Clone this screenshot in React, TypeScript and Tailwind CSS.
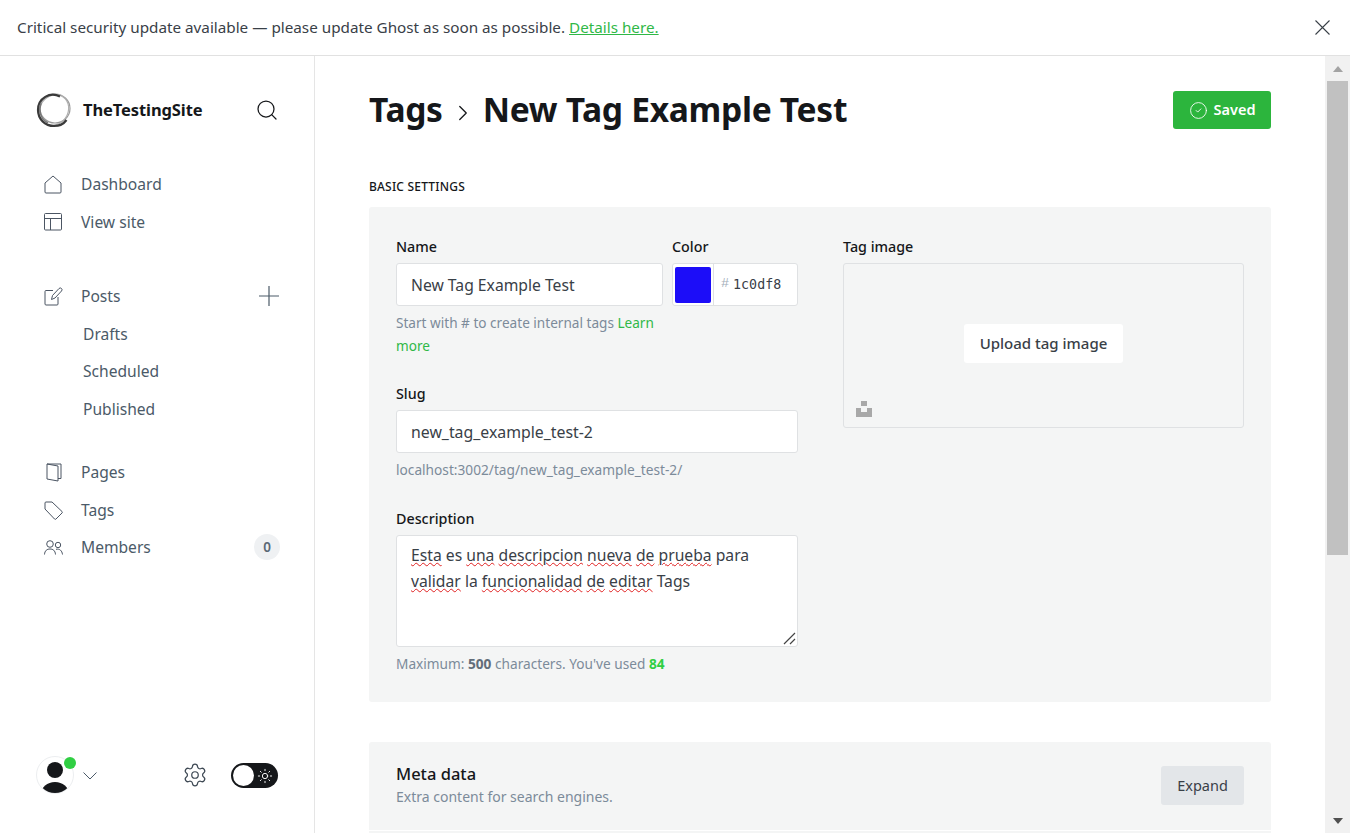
import { Search, Settings, ChevronRight, CircleCheck, Sun } from "lucide-react";

const font = "font-['Noto_Sans','Open_Sans',sans-serif]";

function HomeIcon() {
  return (
    <svg width="18" height="19" viewBox="0 0 18 19" fill="none" stroke="#4b5563" strokeWidth="1">
      <path d="M1 8 L9 1 L17 8 V17 a1 1 0 0 1 -1 1 H2 a1 1 0 0 1 -1 -1 Z" />
    </svg>
  );
}

function LayoutIcon() {
  return (
    <svg width="18" height="18" viewBox="0 0 18 18" fill="none" stroke="#4b5563" strokeWidth="1">
      <rect x="0.5" y="0.5" width="17" height="16.5" rx="1" />
      <path d="M0.5 5.5 H17.5 M6.5 5.5 V17" />
    </svg>
  );
}

function EditIcon() {
  return (
    <svg width="19" height="19" viewBox="0 0 19 19" fill="none" stroke="#4b5563" strokeWidth="1">
      <path d="M9 3.5 H2 a1 1 0 0 0 -1 1 V17 a1 1 0 0 0 1 1 H13 a1 1 0 0 0 1 -1 V10" />
      <path d="M7.5 12.5 L8.5 8.5 L15 1.5 a1.5 1.5 0 0 1 2.5 2.5 L11 11 Z" />
    </svg>
  );
}

function PagesIcon() {
  return (
    <svg width="16" height="19" viewBox="0 0 16 19" fill="none" stroke="#4b5563" strokeWidth="1" className="ml-[2px]">
      <path d="M1 1 H15 V15.5 H12" />
      <path d="M1 1 L12 3 V18 L1 16 Z" />
    </svg>
  );
}

function TagIcon() {
  return (
    <svg width="19" height="19" viewBox="0 0 19 19" fill="none" stroke="#4b5563" strokeWidth="1">
      <path d="M1 2 a1 1 0 0 1 1 -1 H8 L18 10.5 a1 1 0 0 1 0 1.5 L12 18 a1 1 0 0 1 -1.5 0 L1 8 Z" />
    </svg>
  );
}

function MembersIcon() {
  return (
    <svg width="19" height="15" viewBox="0 0 19 15" fill="none" stroke="#4b5563" strokeWidth="1">
      <circle cx="6" cy="4" r="3.3" />
      <circle cx="14" cy="5" r="2.7" />
      <path d="M0.5 14.5 C0.8 10.5 3 9 6 9 C9 9 11.2 10.5 11.5 14.5" />
      <path d="M12 9.3 C15.5 8.5 18 10.5 18.5 14.5" />
    </svg>
  );
}

function Logo() {
  return (
    <svg width="36" height="36" viewBox="0 0 36 36" fill="none">
      <ellipse cx="19" cy="16.5" rx="15" ry="14.5" stroke="#9a9a9a" strokeWidth="1.2" />
      <ellipse cx="18" cy="18" rx="14" ry="16" stroke="#b0b0b0" strokeWidth="1.2" transform="rotate(35 18 18)" />
      <path d="M24 4.5 C14 -0.5 2 6 2 18 C2 27 9 34 18 34 C24 34 28 31.5 30.5 28" stroke="#3a3a3a" strokeWidth="2.2" />
      <path d="M5 11 C2.5 18 4 27 12 31" stroke="#777" strokeWidth="1.6" />
    </svg>
  );
}

function NavItem({ icon, label, right }: { icon: React.ReactNode; label: string; right?: React.ReactNode }) {
  return (
    <div className="flex h-[37.5px] items-center pl-[44px] pr-[35px] text-[15.6px] text-[#4b5a68]">
      <span className="flex w-[37px] items-center">{icon}</span>
      <span className="flex-1">{label}</span>
      {right}
    </div>
  );
}

function Sidebar() {
  return (
    <aside className="flex w-[315px] shrink-0 flex-col border-r border-[#e5e5e5] bg-white">
      <div className="flex h-[108px] items-center pl-[36px] pr-[35px]">
        <Logo />
        <span className="ml-[11px] flex-1 text-[16.5px] font-bold tracking-[-0.1px] text-[#15171a]">TheTestingSite</span>
        <Search size={24} strokeWidth={1.25} className="text-[#15171a]" />
      </div>
      <nav className="mt-[2px]">
        <NavItem icon={<HomeIcon />} label="Dashboard" />
        <NavItem icon={<LayoutIcon />} label="View site" />
      </nav>
      <nav className="mt-[37px]">
        <NavItem
          icon={<EditIcon />}
          label="Posts"
          right={
            <svg width="20" height="20" viewBox="0 0 20 20" fill="none" stroke="#4b5a68" strokeWidth="1.2" className="mb-[2px]">
              <path d="M10 0 V20 M0 10 H20" />
            </svg>
          }
        />
        <div className="pl-[83px] text-[15.6px] text-[#4b5a68]">
          <div className="flex h-[37.5px] items-center">Drafts</div>
          <div className="flex h-[37.5px] items-center">Scheduled</div>
          <div className="flex h-[37.5px] items-center">Published</div>
        </div>
      </nav>
      <nav className="mt-[26px]">
        <NavItem icon={<PagesIcon />} label="Pages" />
        <NavItem icon={<TagIcon />} label="Tags" />
        <NavItem
          icon={<MembersIcon />}
          label="Members"
          right={
            <span className="mb-[2px] mr-[-1px] flex h-[26px] w-[26px] items-center justify-center rounded-full bg-[#eff1f3] text-[13.5px] font-semibold text-[#5b6875]">
              0
            </span>
          }
        />
      </nav>
      <div className="mt-auto flex h-[80px] items-start px-[36px] pt-[3px]">
        <div className="relative h-[38px] w-[38px] rounded-full border border-[#eceef0] bg-white">
          <svg width="36" height="36" viewBox="0 0 36 36" className="overflow-hidden rounded-full">
            <circle cx="18" cy="13" r="8" fill="#15171a" />
            <ellipse cx="18" cy="37" rx="14" ry="12" fill="#15171a" />
          </svg>
          <span className="absolute right-[-3px] top-0 h-[12px] w-[12px] rounded-full bg-[#30cf43]" />
        </div>
        <svg width="14" height="8" viewBox="0 0 14 8" fill="none" stroke="#4b5a68" strokeWidth="1" className="ml-[9px] mt-[16px]">
          <path d="M0.5 0.5 L7 7 L13.5 0.5" />
        </svg>
        <Settings size={26} strokeWidth={1.15} className="ml-[85px] mt-[6px] text-[#3f4a55]" />
        <div className="ml-[23px] mt-[7px] flex h-[25px] w-[47px] items-center rounded-full bg-[#15171a] pl-[2px]">
          <span className="h-[21px] w-[21px] rounded-full bg-white" />
          <Sun size={16} strokeWidth={1.4} className="ml-[3px] text-white" />
        </div>
      </div>
    </aside>
  );
}

function Label({ children }: { children: React.ReactNode }) {
  return <div className="mb-[4px] text-[14.3px] font-medium leading-[24px] text-[#15171a]">{children}</div>;
}

function Misspelled({ children }: { children: React.ReactNode }) {
  return <span className="underline decoration-[#e02020] decoration-wavy decoration-1 underline-offset-[1px]">{children}</span>;
}

function TagForm() {
  return (
    <div className="rounded-[3px] bg-[#f4f5f5] px-[27px] pb-[27px] pt-[28px]">
      <div className="flex gap-[45px]">
        <div className="w-[402px]">
          <div className="flex gap-[9px]">
            <div className="w-[267px]">
              <Label>Name</Label>
              <div className="flex h-[43px] items-center rounded-[3px] border border-[#dfe1e3] bg-white px-[14px] pt-[2px] text-[15.7px] text-[#394047]">
                New Tag Example Test
              </div>
              <p className="mt-[5px] text-[13.6px] leading-[23px] text-[#7c8b9a]">
                Start with # to create internal tags <span className="text-[#30b847]">Learn</span>{" "}
                <span className="text-[#30b847]">more</span>
              </p>
            </div>
            <div className="w-[126px]">
              <Label>Color</Label>
              <div className="flex h-[43px] items-center rounded-[3px] border border-[#dfe1e3] bg-white">
                <span className="ml-[2px] h-[36px] w-[36px] rounded-[2px] bg-[#1c0df8]" />
                <span className="ml-[2px] h-full border-l border-[#dfe1e3]" />
                <span className="ml-[7px] font-['Liberation_Mono',monospace] text-[13.5px] text-[#a3aeb9]">#</span>
                <span className="ml-[4px] font-['DejaVu_Sans_Mono',monospace] text-[13.3px] text-[#394047]">1c0df8</span>
              </div>
            </div>
          </div>
          <div className="mt-[25px]">
            <Label>Slug</Label>
            <div className="flex h-[43px] items-center rounded-[3px] border border-[#dfe1e3] bg-white px-[14px] pt-[3px] text-[15.85px] text-[#394047]">
              new_tag_example_test-2
            </div>
            <p className="mt-[5px] text-[13.7px] leading-[23px] text-[#7c8b9a]">localhost:3002/tag/new_tag_example_test-2/</p>
          </div>
          <div className="mt-[26px]">
            <Label>Description</Label>
            <div className="relative h-[112px] rounded-[3px] border border-[#dfe1e3] bg-white px-[14px] py-[6px] text-[15.7px] leading-[26px] text-[#394047]">
              <Misspelled>Esta</Misspelled> es <Misspelled>una</Misspelled> <Misspelled>descripcion</Misspelled>{" "}
              <Misspelled>nueva</Misspelled> <Misspelled>de</Misspelled> <Misspelled>prueba</Misspelled> para{" "}
              <Misspelled>validar</Misspelled> la <Misspelled>funcionalidad</Misspelled> <Misspelled>de</Misspelled>{" "}
              <Misspelled>editar</Misspelled> Tags
              <svg width="13" height="13" viewBox="0 0 13 13" className="absolute bottom-[1px] right-[1px]" stroke="#444" strokeWidth="1.2">
                <path d="M1 12 L12 1 M7 12 L12 7" />
              </svg>
            </div>
            <p className="mt-[5px] text-[13.66px] leading-[23px] text-[#7c8b9a]">
              Maximum: <b className="font-bold text-[#626d79]">500</b> characters. You've used{" "}
              <b className="font-bold text-[#30cf43]">84</b>
            </p>
          </div>
        </div>
        <div className="w-[401px]">
          <Label>Tag image</Label>
          <div className="relative flex h-[165px] items-center justify-center rounded-[3px] border border-[#dfe1e3] bg-[#f4f5f5]">
            <button className="mb-[5px] h-[39px] w-[159px] rounded-[3px] bg-white text-[15px] font-medium text-[#394047]">Upload tag image</button>
            <svg width="16" height="16" viewBox="0 0 16 16" className="absolute bottom-[10px] left-[12px]" fill="#a8a8a8">
              <rect x="5" y="0" width="6" height="5" />
              <path d="M0 7 H5 V11 H11 V7 H16 V16 H0 Z" />
            </svg>
          </div>
        </div>
      </div>
    </div>
  );
}

function MetaCard() {
  return (
    <div className="mt-[40px] flex h-[88px] items-center justify-between rounded-t-[3px] bg-[#f4f5f5] px-[27px]">
      <div className="pb-[2px]">
        <div className="mb-[2px] text-[16.5px] font-medium leading-[22px] text-[#15171a]">Meta data</div>
        <div className="text-[14px] leading-[20px] text-[#7c8b9a]">Extra content for search engines.</div>
      </div>
      <button className="mb-[1px] h-[39px] w-[83px] rounded-[3px] bg-[#e3e6e9] text-[14.5px] text-[#394047]">Expand</button>
    </div>
  );
}

export default function App() {
  return (
    <div className={`${font} flex h-[833px] w-[1350px] flex-col overflow-hidden bg-white`}>
      <div className="flex h-[56px] shrink-0 items-center justify-between border-b border-[#e1e1e1] pl-[17px] pr-[20px] text-[15.25px] text-[#394047]">
        <p>
          Critical security update available — please update Ghost as soon as possible.{" "}
          <a className="text-[#30b847] underline">Details here.</a>
        </p>
        <svg width="15" height="15" viewBox="0 0 15 15" fill="none" stroke="#394047" strokeWidth="1.1">
          <path d="M0.5 0.5 L14.5 14.5 M14.5 0.5 L0.5 14.5" />
        </svg>
      </div>
      <div className="flex min-h-0 flex-1">
        <Sidebar />
        <main className="min-w-0 flex-1 overflow-hidden px-[54px]">
          <div className="flex h-[108px] items-center justify-between">
            <h1 className="mb-[2px] flex items-center text-[33.6px] font-bold tracking-[-0.3px] text-[#15171a]">
              Tags
              <ChevronRight size={26} strokeWidth={1.2} className="mx-[7px] mt-[8px]" />
              New Tag Example Test
            </h1>
            <button className="flex h-[38px] w-[98px] items-center justify-center gap-[6px] rounded-[3px] bg-[#2cb53d] text-[14.5px] font-semibold text-white">
              <CircleCheck size={19} strokeWidth={1.1} />
              Saved
            </button>
          </div>
          <h2 className="mb-[11px] mt-[14px] text-[12px] font-medium uppercase leading-[18px] tracking-[0.2px] text-[#15171a]">Basic settings</h2>
          <TagForm />
          <MetaCard />
          <div className="mt-[1px] h-[40px] bg-[#f4f5f5]" />
        </main>
        <div className="flex w-[25px] shrink-0 flex-col items-center bg-[#f1f1f1]">
          <div className="flex h-[25px] items-center justify-center">
            <span className="h-0 w-0 border-x-[5px] border-b-[6px] border-x-transparent border-b-[#a3a3a3]" />
          </div>
          <div className="h-[474px] w-[21px] bg-[#c1c1c1]" />
          <div className="mt-auto flex h-[25px] items-center justify-center">
            <span className="h-0 w-0 border-x-[5px] border-t-[6px] border-x-transparent border-t-[#505050]" />
          </div>
        </div>
      </div>
    </div>
  );
}
